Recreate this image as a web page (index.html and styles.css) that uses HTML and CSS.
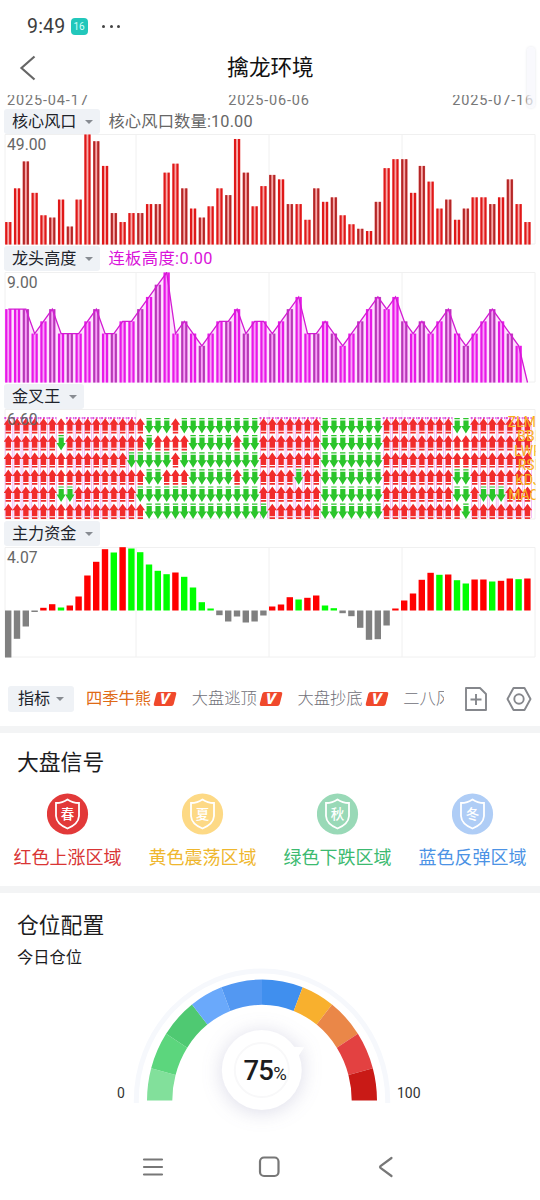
FILE: index.html
```
<!DOCTYPE html>
<html lang="zh-CN">
<head>
  <meta charset="UTF-8" />
  <meta name="viewport" content="width=device-width, initial-scale=1.0" />
  <title>擒龙环境</title>
  <link rel="stylesheet" href="styles.css">
</head>
<body>
  <div class="status-bar">
    <span class="clock">9:49</span>
    <span class="app-badge">16</span>
    <span class="dots"><i></i><i></i><i></i></span>
  </div>

  <header class="title-bar">
    <svg class="back" width="18" height="28" viewBox="0 0 18 28"><path d="M15.5 2.5 L2.5 14 L15.5 25.5" /></svg>
    <h1>擒龙环境</h1>
  </header>
  <div class="side-handle"></div>

  <div class="dates">
    <span>2025-04-17</span>
    <span>2025-06-06</span>
    <span>2025-07-16</span>
  </div>

  <section class="panel">
    <div class="panel-head">
      <button class="chip">核心风口<i class="caret"></i></button>
      <span class="reading">核心风口数量:10.00</span>
    </div>
    <svg class="chart" id="hotChart" viewBox="0 0 540 111"></svg>
  </section>

  <section class="panel">
    <div class="panel-head">
      <button class="chip">龙头高度<i class="caret"></i></button>
      <span class="reading magenta">连板高度:0.00</span>
    </div>
    <svg class="chart" id="heightChart" viewBox="0 0 540 111"></svg>
  </section>

  <section class="panel">
    <div class="panel-head">
      <button class="chip">金叉王<i class="caret"></i></button>
    </div>
    <svg class="chart" id="crossChart" viewBox="0 0 540 111"></svg>
  </section>

  <section class="panel">
    <div class="panel-head">
      <button class="chip">主力资金<i class="caret"></i></button>
    </div>
    <svg class="chart" id="fundChart" viewBox="0 0 540 111"></svg>
  </section>

  <nav class="tabs">
    <button class="chip">指标<i class="caret"></i></button>
    <div class="tab-list">
      <span class="tab active">四季牛熊<b class="vip">V</b></span>
      <span class="tab">大盘逃顶<b class="vip">V</b></span>
      <span class="tab">大盘抄底<b class="vip">V</b></span>
      <span class="tab">二八风向</span>
    </div>
    <svg class="tool" width="24" height="26" viewBox="0 0 24 26">
      <path d="M2 2 H16 L22 8 V24 H2 Z" />
      <path d="M12 8 V19 M6.5 13.5 H17.5" />
    </svg>
    <svg class="tool" width="26" height="26" viewBox="0 0 26 26">
      <path d="M7.5 2 H18.5 L24.5 13 L18.5 24 H7.5 L1.5 13 Z" />
      <circle cx="13" cy="13" r="4.7" />
    </svg>
  </nav>

  <section class="signals">
    <h2>大盘信号</h2>
    <div class="signal-row">
      <div class="signal red">
        <svg width="42" height="42" viewBox="0 0 42 42"><circle cx="20.5" cy="21" r="20.6" /><path d="M20.5 6.5 Q25.5 10 32 10 V23 Q31.500 31 20.500 35.5 Q9.500 31 9 23 V10 Q15.500 10 20.500 6.5 Z" /><text x="20.5" y="26">春</text></svg>
        <span>红色上涨区域</span>
      </div>
      <div class="signal yellow">
        <svg width="42" height="42" viewBox="0 0 42 42"><circle cx="20.5" cy="21" r="20.6" /><path d="M20.5 6.5 Q25.5 10 32 10 V23 Q31.500 31 20.500 35.5 Q9.500 31 9 23 V10 Q15.500 10 20.500 6.5 Z" /><text x="20.5" y="26">夏</text></svg>
        <span>黄色震荡区域</span>
      </div>
      <div class="signal green">
        <svg width="42" height="42" viewBox="0 0 42 42"><circle cx="20.5" cy="21" r="20.6" /><path d="M20.5 6.5 Q25.5 10 32 10 V23 Q31.500 31 20.500 35.5 Q9.500 31 9 23 V10 Q15.500 10 20.500 6.5 Z" /><text x="20.5" y="26">秋</text></svg>
        <span>绿色下跌区域</span>
      </div>
      <div class="signal blue">
        <svg width="42" height="42" viewBox="0 0 42 42"><circle cx="20.5" cy="21" r="20.6" /><path d="M20.5 6.5 Q25.5 10 32 10 V23 Q31.500 31 20.500 35.5 Q9.500 31 9 23 V10 Q15.500 10 20.500 6.5 Z" /><text x="20.5" y="26">冬</text></svg>
        <span>蓝色反弹区域</span>
      </div>
    </div>
  </section>

  <section class="position">
    <h2>仓位配置</h2>
    <p>今日仓位</p>
    <svg class="gauge" id="gauge" width="540" height="172" viewBox="0 968 540 172"></svg>
  </section>

  <footer class="nav-bar">
    <svg width="22" height="22" viewBox="0 0 22 22"><path d="M2 3.5 H20 M2 11 H20 M2 18.5 H20" /></svg>
    <svg width="22" height="22" viewBox="0 0 22 22"><rect x="2" y="1.5" width="18.5" height="18.5" rx="4" /></svg>
    <svg width="22" height="22" viewBox="0 0 22 22"><path d="M17.5 2 L6.5 10 Q5.5 11 6.5 12 L17.5 20" /></svg>
  </footer>

  <script src="script.js"></script>
</body>
</html>
```
FILE: styles.css
```
* {
  box-sizing: border-box;
}
body {
  margin: 0;
  width: 540px;
  height: 1200px;
  overflow: hidden;
  position: relative;
  background: #fff;
  color: #1c1c1e;
  font-family: Roboto, "Noto Sans CJK SC", sans-serif;
}
h1, h2, p {
  margin: 0;
  font-weight: normal;
}
i {
  font-style: normal;
}
button {
  border: 0;
  padding: 0;
  font: inherit;
}
svg {
  display: block;
}

/* top of the screen */
.status-bar {
  height: 40px;
  padding: 12px 0 0 27px;
  display: flex;
  align-items: center;
}
.clock {
  font-size: 19.5px;
  color: #3c3c3c;
  width: 43.5px;
  letter-spacing: 0.2px;
}
.app-badge {
  width: 17px;
  height: 17px;
  border-radius: 4px;
  background: #22c7bb;
  color: #d4fffa;
  font-size: 10px;
  line-height: 17px;
  text-align: center;
}
.dots {
  display: flex;
  gap: 4.5px;
  margin-left: 14.5px;
}
.dots i {
  width: 3px;
  height: 3px;
  border-radius: 50%;
  background: #444;
}
.title-bar {
  height: 55px;
  display: flex;
  align-items: center;
  padding-left: 19px;
}
.back {
  fill: none;
  stroke: #666;
  stroke-width: 2.2;
}
.title-bar h1 {
  flex: 1;
  padding: 1px 36px 0 0;
  text-align: center;
  font-size: 21.6px;
  line-height: 30px;
  color: #111;
}
.side-handle {
  position: absolute;
  left: 527px;
  top: 47px;
  width: 8px;
  height: 61px;
  border-radius: 5px;
  background: rgba(246, 247, 252, 0.7);
  box-shadow: 0 0 3px #e2e4ea;
}
.dates {
  height: 12.5px;
  overflow: hidden;
  padding: 0 6px 0 7px;
  display: flex;
  justify-content: space-between;
  font-size: 14.5px;
  line-height: 11px;
  letter-spacing: 0.85px;
  color: #777;
}
.dates span:nth-child(2) {
  margin-right: 3px;
}

/* indicator panels */
.panel {
  height: 137.5px;
}
.panel-head {
  height: 26.5px;
  padding: 1px 0 0 4px;
  display: flex;
  align-items: center;
  gap: 8px;
}
.chip {
  height: 25px;
  padding: 1px 7px 0 8px;
  display: flex;
  align-items: center;
  gap: 9px;
  border-radius: 3px;
  background: #eff2f6;
  color: #20232b;
  font-size: 16.1px;
  line-height: 24px;
}
.caret {
  border: 4px solid transparent;
  border-top: 4.5px solid #888c92;
  border-bottom: 0;
}
.reading {
  padding-top: 1px;
  font-size: 16.3px;
  line-height: 24px;
  letter-spacing: 0.15px;
  color: #666;
}
.reading.magenta {
  color: #d912d9;
  letter-spacing: 0.4px;
}
.chart {
  width: 540px;
  height: 111px;
}
.frame {
  fill: none;
  stroke: #f0f0f0;
}
.scale {
  font-size: 15.7px;
  fill: #666;
}
.lamp {
  font-size: 14px;
  fill: #f7b21c;
  text-anchor: middle;
}

/* indicator tabs */
.tabs {
  height: 68.5px;
  padding: 14px 8px 0;
  display: flex;
  align-items: center;
}
.tabs .chip {
  width: 66px;
  height: 26px;
  padding-left: 10px;
  gap: 6px;
  flex: none;
}
.tab-list {
  width: 358px;
  margin-left: 12px;
  display: flex;
  gap: 17px;
  overflow: hidden;
  flex: none;
}
.tab {
  display: flex;
  align-items: center;
  gap: 4px;
  flex: none;
  font-size: 16.3px;
  font-weight: 300;
  line-height: 26px;
  color: #707078;
}
.tab.active {
  color: #df6a16;
  font-weight: normal;
}
.vip {
  width: 19.6px;
  height: 14px;
  transform: skewX(-14deg);
  border-radius: 2px;
  background: #f0492c;
  color: #fff;
  font-size: 15px;
  font-weight: 900;
  line-height: 14.5px;
  text-align: center;
}
.tool {
  flex: none;
  margin-left: 20px;
  fill: none;
  stroke: #85878c;
  stroke-width: 1.9;
  stroke-linejoin: round;
}
.tool + .tool {
  margin-left: 17.5px;
}

/* market signals */
.signals {
  height: 160px;
  border-top: 7px solid #f3f4f5;
  padding-top: 14px;
}
h2 {
  padding-left: 17px;
  font-size: 21.8px;
  line-height: 31px;
}
.signal-row {
  display: grid;
  grid-template-columns: repeat(4, 1fr);
  padding-top: 15px;
}
.signal {
  display: flex;
  flex-direction: column;
  align-items: center;
  gap: 10px;
  font-size: 18px;
  line-height: 26px;
}
.signal path {
  fill: none;
  stroke: #fff;
  stroke-width: 1.8;
}
.signal text {
  fill: #fff;
  font-size: 13.5px;
  font-weight: 500;
  text-anchor: middle;
}
.red { color: #d93535; }
.red circle { fill: #e23939; }
.yellow { color: #efb72e; }
.yellow circle { fill: #fdd985; }
.green { color: #3cba70; }
.green circle { fill: #99d9b7; }
.blue { color: #4c93e5; }
.blue circle { fill: #afcdf6; }

/* position gauge */
.position {
  height: 254px;
  border-top: 7px solid #f3f4f5;
  padding-top: 17px;
}
.position p {
  padding-left: 17px;
  font-size: 16.3px;
  line-height: 24px;
  padding-top: 5px;
}
.gauge {
  margin-top: -2px;
}
.track {
  fill: none;
  stroke: #f6f8fc;
  stroke-width: 5;
}
.knob {
  fill: #fff;
  filter: drop-shadow(0 2px 10px rgba(75, 75, 140, 0.2));
}
.dial {
  fill: #fff;
  stroke: #f8f8f9;
  stroke-width: 2;
}
.percent {
  font-size: 27.5px;
  font-weight: 500;
  letter-spacing: -0.8px;
  fill: #1c1c1e;
}
.percent tspan {
  font-size: 18.5px;
  font-weight: 400;
}
.limit {
  font-size: 14px;
  fill: #333;
}

.nav-bar {
  height: 54px;
  padding-left: 142px;
  display: flex;
  gap: 94px;
  align-items: center;
}
.nav-bar svg {
  fill: none;
  stroke: #777;
  stroke-width: 2.2;
  stroke-linecap: round;
}
```
FILE: script.js
```
const STEP = 8.8;
const LEFT = 5;
const BAR = 6.6;

const hot = [10, 25, 37, 23, 13, 12, 20, 8, 20, 49, 46, 35, 14, 10, 14, 14, 18, 18, 32, 36,
  25, 16, 12, 17, 25, 22, 47, 32, 17, 26, 31, 29, 18, 18, 11, 25, 19, 21, 13, 9,
  7, 6, 19, 34, 38, 38, 23, 35, 28, 16, 20, 11, 16, 21, 21, 18, 21, 29, 18, 10];

const heights = [6, 6, 6, 4, 5, 6, 4, 4, 4, 5, 6, 4, 4, 5, 5, 6, 7, 8, 9, 4,
  5, 4, 3, 4, 5, 5, 6, 4, 5, 5, 4, 5, 6, 7, 4, 4, 5, 4, 3, 4,
  5, 6, 7, 6, 7, 5, 4, 5, 4, 5, 6, 4, 3, 4, 5, 6, 5, 4, 3, 0];

// columns that point down, as [first, last] per row
const falls = [
  [[16, 18], [20, 28], [36, 42], [51, 52]],
  [[6, 6], [16, 16], [21, 25], [27, 28], [36, 42]],
  [[14, 18], [20, 28], [36, 42]],
  [[16, 17], [21, 25], [27, 28], [33, 33], [36, 42], [51, 52]],
  [[6, 7], [15, 28], [36, 42], [51, 52], [54, 56]],
  [[16, 29], [36, 42], [52, 52]]
];
const lamps = ["ZLMM", "BBI", "LWR", "RSI", "KDJ", "MACD"];

const funds = [-47, -28.3, -16, -1.5, 2.7, 6.3, 3, 5, 14, 35, 48.7, 61.3, 58, 63.3, 62, 58.3, 46, 39.7, 36.3, 38,
  33.7, 23, 8.3, 2, -4.7, -11, -6, -12, -11, -5, 4, 6, 13.3, 11, 12.7, 15, 5, 2.3, -2.7, -5.7,
  -17.3, -29.3, -28.7, -15, 2, 10, 17, 30.7, 37.7, 35.7, 36, 30.3, 27, 31, 31, 29, 29.7, 32, 31.3, 32];
const greens = [6, 12, 14, 15, 16, 17, 18, 20, 21, 22, 23, 33, 36, 37, 49, 51, 52, 55, 58];

function frame() {
  return `<path class="frame" d="M5 .5 H535 V110 H5 Z M136 .5 V110 M269 .5 V110 M402 .5 V110" />`;
}

function scale(text) {
  return `<text class="scale" x="7" y="16">${text}</text>`;
}

function stripedBars(values, max, bright, dull, light) {
  return values.map((v, i) => {
    const x = LEFT + i * STEP;
    const h = v / max * 110;
    const y = 110.5 - h;
    const color = i && (i % 5 === 0 || i % 5 === 2) ? dull : bright;
    return `<rect x="${x}" y="${y}" width="${BAR}" height="${h}" fill="${light}" />
      <rect x="${x + 0.2}" y="${y}" width="2.1" height="${h}" fill="${color}" />
      <rect x="${x + 4.2}" y="${y}" width="2.1" height="${h}" fill="${color}" />`;
  }).join("");
}

function drawHeights() {
  const points = heights.map((v, i) => `${LEFT + 3.3 + i * STEP},${110.5 - v / 9 * 110}`).join(" ");
  return `<polygon points="5,110 5,37 ${points}" fill="#fde3fd" />` +
    stripedBars(heights, 9, "#e818e8", "#b638b6", "#f9a0f9") +
    `<polyline points="${points}" fill="none" stroke="#d31bd3" stroke-width="1.3" />`;
}

function drawCross() {
  let arrows = "";
  let lines = "";
  for (let i = 0; i < 60; i++) {
    const x = LEFT + 3.3 + i * STEP;
    const down = falls.map(row => row.some(([a, b]) => i >= a && i <= b));
    if (down.filter(Boolean).length < 2) {
      lines += `<path d="M${x - 3} 8 V109 M${x + 4} 8 V109" stroke="#f3b5f3" stroke-width="0.9" />
        <path d="M${x - 4} 9 H${x + 4}" stroke="#d52cd5" stroke-width="1.5" stroke-dasharray="2 1.5" />`;
    }
    down.forEach((isDown, r) => {
      const y = 9 + r * 17.1;
      arrows += isDown
        ? `<path transform="translate(${x} ${y})" fill="#2bc52b" d="M-2.7 0 H2.7 V1.2 H-2.7 Z M-2.5 2.5 H2.7 V8 H4.6 L0 15.5 L-4.6 8 H-2.5 Z" />`
        : `<path transform="translate(${x} ${y})" fill="#f12c2c" d="M0 .2 L4.7 6.7 H2.7 V12.7 H-2.7 V6.7 H-4.7 Z M-2.7 13.7 H2.7 V15.4 H-2.7 Z" />`;
    });
  }
  const names = lamps.map((name, i) => `<text class="lamp" x="528" y="${17.5 + i * 14.6}">${name}</text>`).join("");
  return `<clipPath id="plot"><rect x="4" y="0" width="531.5" height="111" /></clipPath>
    <g clip-path="url(#plot)">${lines}${arrows}${names}</g>`;
}

function drawFunds() {
  return funds.map((v, i) => {
    const color = v < 0 ? "#808080" : greens.includes(i) ? "#00ff00" : "#ff0000";
    return `<rect x="${LEFT + i * STEP}" y="${v < 0 ? 63.5 : 63.5 - v}" width="6.4" height="${Math.abs(v)}" fill="${color}" />`;
  }).join("");
}

document.getElementById("hotChart").innerHTML =
  frame() + scale("49.00") + stripedBars(hot, 49, "#e01818", "#b42626", "#f7aaaa");
document.getElementById("heightChart").innerHTML = frame() + scale("9.00") + drawHeights();
document.getElementById("crossChart").innerHTML = frame() + drawCross() + scale("6.60");
document.getElementById("fundChart").innerHTML = frame() + scale("4.07") + drawFunds();

// gauge
const stops = [0, 15.5, 33.5, 52.5, 69.3, 90, 110.7, 127.5, 146.5, 164.5, 180];
const colors = ["#82e09b", "#5cd67d", "#4fc972", "#6aa9fb", "#5398f2", "#408fee", "#f8b02e", "#ea8748", "#e34141", "#c91a16"];

function onArc(deg, rx, ry) {
  const a = deg * Math.PI / 180;
  return `${262 - rx * Math.cos(a)} ${1100.5 - ry * Math.sin(a)}`;
}

const segments = colors.map((color, i) => {
  const a = stops[i];
  const b = stops[i + 1];
  return `<path fill="${color}" d="M${onArc(a, 115, 121)} A115 121 0 0 1 ${onArc(b, 115, 121)}
    L${onArc(b, 89.7, 95.7)} A89.7 95.7 0 0 0 ${onArc(a, 89.7, 95.7)} Z" />`;
}).join("");

document.getElementById("gauge").innerHTML = `
  <path class="track" d="M136.3 1103 V1100.5 A125.7 129.6 0 0 1 387.7 1100.5 V1103" />
  ${segments}
  <g class="knob">
    <circle cx="261.8" cy="1070" r="40" />
    <path d="M292 1046.7 L304.3 1047.3 L298.5 1056 Z" />
  </g>
  <circle class="dial" cx="261.8" cy="1070" r="27" />
  <text class="percent" x="243.5" y="1079.5">75<tspan>%</tspan></text>
  <text class="limit" x="117" y="1098">0</text>
  <text class="limit" x="397" y="1098">100</text>`;
```
